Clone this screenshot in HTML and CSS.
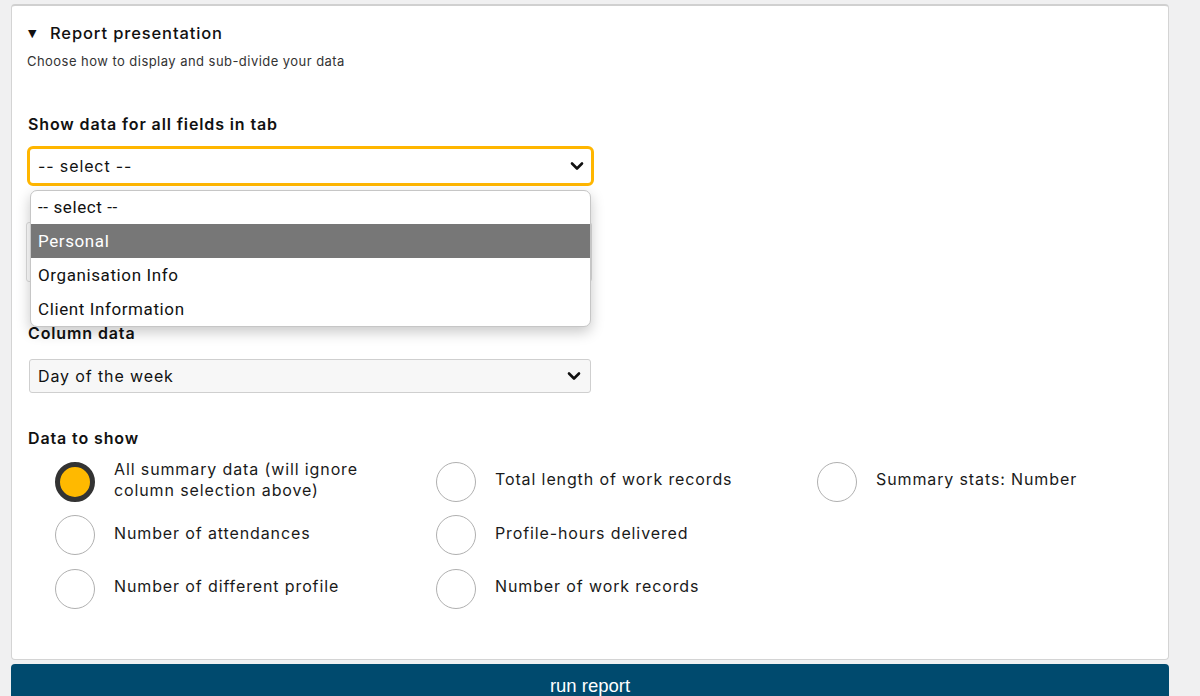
FILE: index.html
```html
<!DOCTYPE html>
<html lang="en">
<head>
<meta charset="utf-8">
<title>Report presentation</title>
<link rel="stylesheet" href="styles.css">
</head>
<body>
<div class="page">
  <section class="card">
    <div class="summary"><span class="tri">&#9660;</span><span class="title">Report presentation</span></div>
    <p class="desc">Choose how to display and sub-divide your data</p>

    <div class="field field-tab">
      <div class="label">Show data for all fields in tab</div>
      <div class="select focused"><span>-- select --</span>
        <svg class="chev" width="14" height="10" viewBox="0 0 14 10"><path d="M2 2.5 L7 7.5 L12 2.5" fill="none" stroke="#111" stroke-width="2.6" stroke-linecap="round" stroke-linejoin="round"/></svg>
      </div>
      <ul class="menu">
        <li>-- select --</li>
        <li class="hl">Personal</li>
        <li>Organisation Info</li>
        <li>Client Information</li>
      </ul>
    </div>

    <div class="field field-row"><div class="hidden-box"></div></div>

    <div class="field field-col">
      <div class="label">Column data</div>
      <div class="select plain"><span>Day of the week</span>
        <svg class="chev" width="14" height="10" viewBox="0 0 14 10"><path d="M2 2.5 L7 7.5 L12 2.5" fill="none" stroke="#111" stroke-width="2.6" stroke-linecap="round" stroke-linejoin="round"/></svg>
      </div>
    </div>

    <div class="label data-label">Data to show</div>
    <div class="radios">
      <div class="radio"><span class="dot on"></span><span class="rlabel">All summary data (will ignore column selection above)</span></div>
      <div class="radio"><span class="dot"></span><span class="rlabel">Total length of work records</span></div>
      <div class="radio"><span class="dot"></span><span class="rlabel">Summary stats: Number</span></div>
      <div class="radio"><span class="dot"></span><span class="rlabel">Number of attendances</span></div>
      <div class="radio"><span class="dot"></span><span class="rlabel">Profile-hours delivered</span></div>
      <div class="radio empty"></div>
      <div class="radio"><span class="dot"></span><span class="rlabel">Number of different profile</span></div>
      <div class="radio"><span class="dot"></span><span class="rlabel">Number of work records</span></div>
    </div>
  </section>
  <button class="run">run report</button>
</div>
</body>
</html>
```
FILE: styles.css
```css
* { box-sizing: border-box; }
html, body { margin: 0; padding: 0; }
body {
  background: #f0f0f1;
  font-family: Inter, "Noto Sans", sans-serif;
  letter-spacing: 0.055em;
  color: #1a1a1a;
  height: 696px;
  overflow: hidden;
}
.page {
  padding: 4px 31px 0 11px;
}
.card {
  background: #fff;
  border: 1px solid #d4d4d4;
  border-top: 2px solid #d0d0d0;
  border-radius: 4px;
  height: 656px;
  padding: 17px 15px 0 15px;
}
.summary {
  display: flex;
  align-items: center;
  height: 20px;
  margin-left: 1px;
}
.tri {
  font-family: "DejaVu Sans", sans-serif;
  font-size: 11px;
  width: 22px;
  color: #111;
  letter-spacing: 0;
}
.title {
  font-size: 16.5px;
  font-weight: 500;
  color: #111;
}
.desc {
  margin: 9px 0 0 0;
  font-size: 13px;
  letter-spacing: 0.035em;
  color: #333;
  line-height: 18px;
}
.field { position: relative; }
.label {
  font-size: 16px;
  font-weight: 600;
  line-height: 20px;
  margin-left: 1px;
  color: #111;
}
.field-tab { margin-top: 44px; }
.field-tab .label { margin-bottom: 12px; }
.select {
  display: flex;
  align-items: center;
  justify-content: space-between;
  font-size: 16px;
  color: #111;
}
.select.focused {
  height: 40px;
  border: 3px solid #ffb600;
  border-radius: 6px;
  padding: 0 7px 0 8px;
  width: 567px;
}
.select.plain {
  height: 34px;
  border: 1px solid #cfcfcf;
  border-radius: 3px;
  background: #f7f7f7;
  padding: 0 9px 0 8px;
  width: 562px;
  margin-left: 2px;
}
.chev { display: block; }
.menu {
  position: absolute;
  left: 3px;
  top: 76px;
  width: 561px;
  margin: 0;
  padding: 0;
  list-style: none;
  background: #fff;
  border: 1px solid #c6c6c6;
  border-radius: 7px;
  box-shadow: 0 5px 14px rgba(0,0,0,0.22);
  overflow: hidden;
  z-index: 5;
  font-family: Roboto, "Noto Sans", sans-serif;
  font-size: 17px;
  letter-spacing: 0.6px;
}
.menu li {
  height: 34px;
  line-height: 34px;
  padding-left: 7px;
  color: #111;
}
.menu li:first-child { height: 33px; line-height: 33px; }
.menu li.hl { background: #777; color: #fff; }
.field-row { margin-top: 36px; }
.hidden-box {
  height: 60px;
  margin-left: -1px;
  border: 1px solid #ddd;
  border-radius: 3px;
  width: 566px;
}
.field-col { margin-top: 41px; }
.field-col .label { margin-bottom: 16px; }
.data-label { margin-top: 35px; }
.radios {
  display: grid;
  grid-template-columns: 381px 381px 381px;
  grid-auto-rows: 53.5px;
  margin: 7px 0 0 28px;
}
.radio {
  display: flex;
  align-items: center;
}
.dot {
  flex: none;
  width: 40px;
  height: 40px;
  border-radius: 50%;
  border: 1.3px solid #b0b0b0;
  background: #fff;
  margin-right: 19px;
}
.dot.on {
  border: 5.5px solid #333;
  background: #ffb900;
}
.rlabel {
  font-size: 16px;
  line-height: 21px;
  width: 260px;
  color: #1a1a1a;
  margin-top: -4px;
}
.run {
  display: block;
  width: 1158px;
  height: 44px;
  margin-top: 4px;
  background: #004a6e;
  border: none;
  border-radius: 4px 4px 0 0;
  color: #fff;
  font-family: "Liberation Sans", Arial, sans-serif;
  font-size: 18.5px;
  padding: 0;
  line-height: 40px;
  letter-spacing: 0;
}
```
